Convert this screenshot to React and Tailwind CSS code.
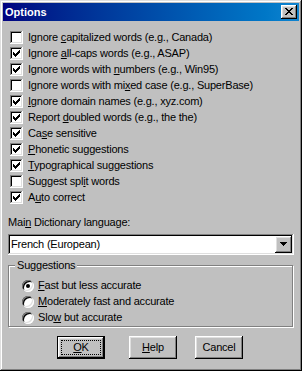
import React from "react";

const raised =
  "shadow-[inset_-1px_-1px_#000,inset_1px_1px_#fff,inset_-2px_-2px_#808080,inset_2px_2px_#dfdfdf]";
const sunken =
  "shadow-[inset_-1px_-1px_#fff,inset_1px_1px_#808080,inset_-2px_-2px_#dfdfdf,inset_2px_2px_#000]";

const options = [
  { label: ["Ignore ", "c", "apitalized words (e.g., Canada)"], checked: false },
  { label: ["Ignore ", "a", "ll-caps words (e.g., ASAP)"], checked: true },
  { label: ["Ignore words with ", "n", "umbers (e.g., Win95)"], checked: true },
  { label: ["Ignore words with mi", "x", "ed case (e.g., SuperBase)"], checked: false },
  { label: ["", "I", "gnore domain names (e.g., xyz.com)"], checked: true },
  { label: ["Report ", "d", "oubled words (e.g., the the)"], checked: true },
  { label: ["Ca", "s", "e sensitive"], checked: true },
  { label: ["", "P", "honetic suggestions"], checked: true },
  { label: ["", "T", "ypographical suggestions"], checked: true },
  { label: ["Suggest spl", "i", "t words"], checked: false },
  { label: ["A", "u", "to correct"], checked: true },
];

const speeds = [
  { label: ["", "F", "ast but less accurate"], checked: true },
  { label: ["", "M", "oderately fast and accurate"], checked: false },
  { label: ["Slo", "w", " but accurate"], checked: false },
];

function Label({ parts }) {
  return (
    <span className="leading-[13px] whitespace-nowrap">
      {parts[0]}
      <u className="underline-offset-[1px]">{parts[1]}</u>
      {parts[2]}
    </span>
  );
}

function Checkbox({ checked }) {
  return (
    <span className={`relative w-[13px] h-[13px] shrink-0 bg-white ${sunken}`}>
      {checked && (
        <svg
          width="7"
          height="7"
          viewBox="0 0 7 7"
          shapeRendering="crispEdges"
          className="absolute left-[3px] top-[3px]"
        >
          <path
            d="M6 0h1v1h-1zM5 1h2v1h-2zM0 2h1v1h-1zM4 2h3v1h-3zM0 3h2v1h-2zM3 3h3v1h-3zM0 4h5v1h-5zM1 5h3v1h-3zM2 6h1v1h-1z"
            fill="#000"
          />
        </svg>
      )}
    </span>
  );
}

function Radio({ checked }) {
  return (
    <span
      className={`w-[12px] h-[12px] shrink-0 rounded-full bg-white flex items-center justify-center ${sunken}`}
    >
      {checked && <span className="w-[4px] h-[4px] rounded-full bg-black" />}
    </span>
  );
}

function Button({ children, isDefault }) {
  if (isDefault) {
    return (
      <div className="w-[48px] h-[23px] border border-black">
        <div className={`w-full h-full flex items-center justify-center p-[3px] bg-[#c0c0c0] ${raised}`}>
          <div className="w-full h-full border border-dotted border-black flex items-center justify-center">
            {children}
          </div>
        </div>
      </div>
    );
  }
  return (
    <div className={`w-[48px] h-[23px] flex items-center justify-center bg-[#c0c0c0] ${raised}`}>
      {children}
    </div>
  );
}

export default function App() {
  return (
    <div className="w-[302px] h-[371px] bg-[#c0c0c0] p-[3px] flex flex-col text-[11px] tracking-[-0.2px] text-black font-['Liberation_Sans',Arial,sans-serif] shadow-[inset_-1px_-1px_#000,inset_1px_1px_#dfdfdf,inset_-2px_-2px_#808080,inset_2px_2px_#fff]">
      {/* Title bar */}
      <div className="h-[18px] flex items-center justify-between pl-[2px] pr-[2px] bg-gradient-to-r from-[#000080] to-[#1084d0]">
        <span className="text-white font-bold tracking-normal leading-[13px]">Options</span>
        <div className={`w-[16px] h-[14px] bg-[#c0c0c0] flex items-center justify-center ${raised}`}>
          <svg width="8" height="7" viewBox="0 0 8 7" shapeRendering="crispEdges" className="-mt-[1px]">
            <path
              d="M0 0h2v1h-2zM6 0h2v1h-2zM1 1h2v1h-2zM5 1h2v1h-2zM2 2h4v1h-4zM3 3h2v1h-2zM2 4h4v1h-4zM1 5h2v1h-2zM5 5h2v1h-2zM0 6h2v1h-2zM6 6h2v1h-2z"
              fill="#000"
            />
          </svg>
        </div>
      </div>

      {/* Body */}
      <div className="flex flex-col px-[5px] pt-[8px]">
        <div className="flex flex-col pl-[2px]">
          {options.map((o, i) => (
            <div key={i} className="h-[16px] flex items-center gap-[5px]">
              <Checkbox checked={o.checked} />
              <Label parts={o.label} />
            </div>
          ))}
        </div>

        <div className="mt-[9px]">
          <Label parts={["Mai", "n", " Dictionary language:"]} />
        </div>

        <div className={`mt-[3px] h-[21px] w-[286px] bg-white flex items-center p-[2px] ${sunken}`}>
          <span className="flex-1 pl-[1px] leading-[13px]">French (European)</span>
          <div className={`w-[17px] h-[17px] bg-[#c0c0c0] flex items-center justify-center ${raised}`}>
            <svg width="7" height="4" viewBox="0 0 7 4" shapeRendering="crispEdges">
              <path d="M0 0h7v1h-7zM1 1h5v1h-5zM2 2h3v1h-3zM3 3h1v1h-1z" fill="#000" />
            </svg>
          </div>
        </div>

        <fieldset className="mt-[4px] w-[285px] border border-[#808080] shadow-[1px_1px_0_#fff,inset_1px_1px_0_#fff] px-[13px] pb-0 pt-0">
          <legend className="-ml-[7px] px-[2px] leading-[13px] bg-[#c0c0c0]">Suggestions</legend>
          <div className="flex flex-col pt-[6px]">
            {speeds.map((s, i) => (
              <div key={i} className="h-[16px] flex items-center gap-[4px]">
                <Radio checked={s.checked} />
                <Label parts={s.label} />
              </div>
            ))}
          </div>
        </fieldset>

        <div className="mt-[9px] flex pl-[49px]">
          <Button isDefault>
            <Label parts={["", "O", "K"]} />
          </Button>
          <div className="ml-[24px]">
            <Button>
              <Label parts={["", "H", "elp"]} />
            </Button>
          </div>
          <div className="ml-[18px]">
            <Button>
              <span className="leading-[13px]">Cancel</span>
            </Button>
          </div>
        </div>
      </div>
    </div>
  );
}
